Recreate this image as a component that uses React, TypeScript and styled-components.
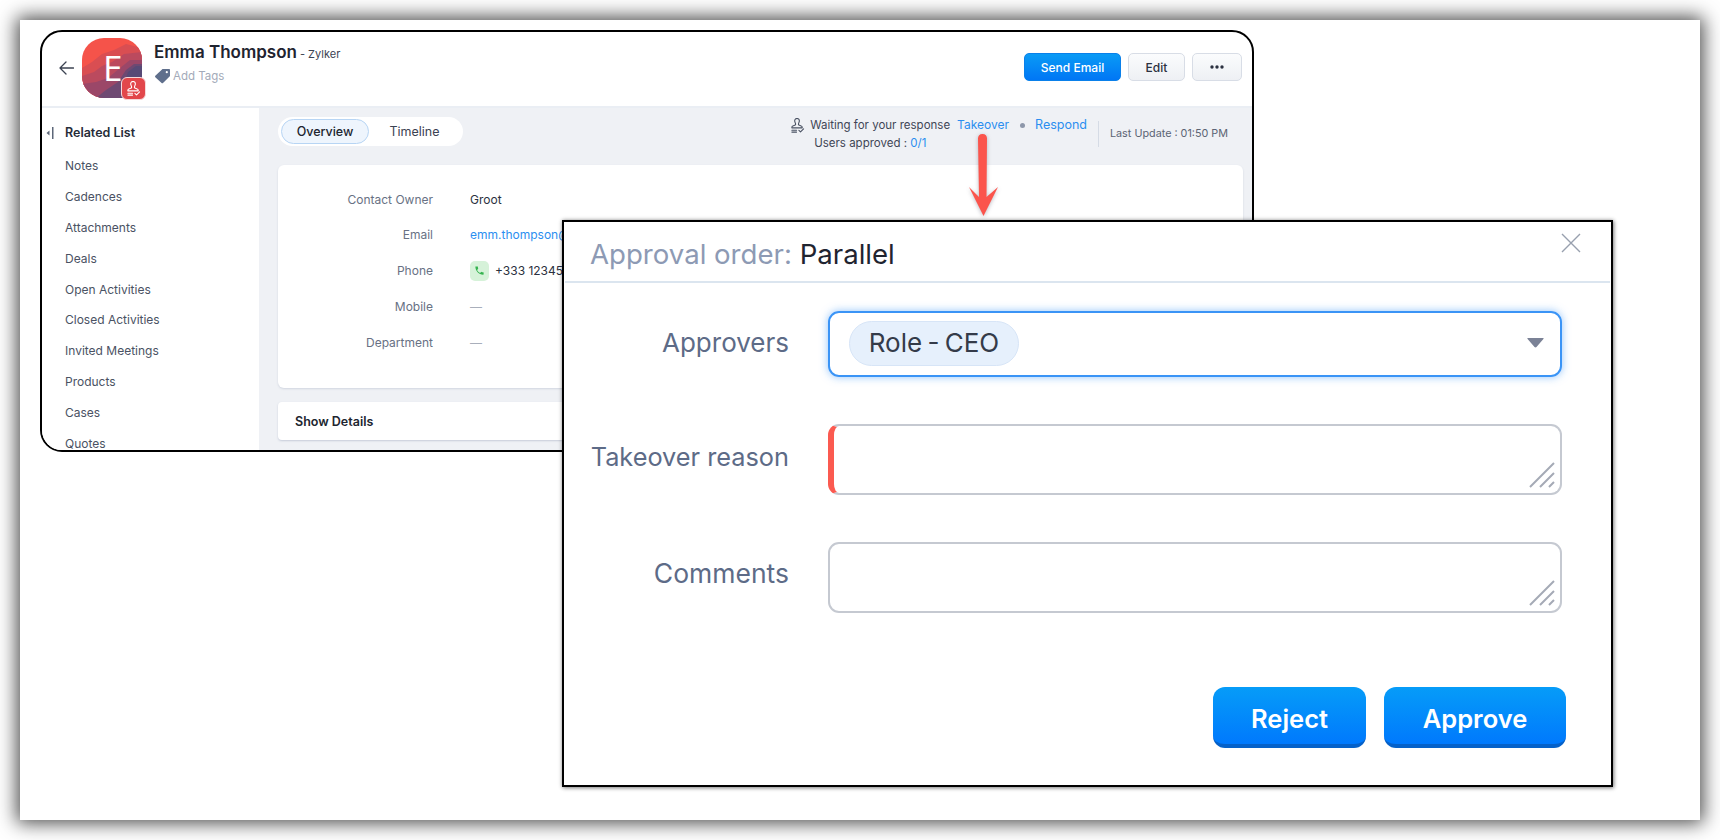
import React from "react";
import styled, { createGlobalStyle } from "styled-components";

const Global = createGlobalStyle`
  html, body { margin: 0; padding: 0; background: #fff; }
  body { font-family: Inter, "Noto Sans", "Liberation Sans", sans-serif; color: #2b3140; }
  #root { padding: 20px; box-sizing: border-box; width: 1720px; height: 840px; overflow: hidden; }
  * { box-sizing: border-box; }
`;

const Frame = styled.div`
  position: relative;
  width: 1680px;
  height: 800px;
  padding: 10px 0 0 20px;
  background: #fff;
  box-shadow: 0 0 18px 3px rgba(0, 0, 0, 0.72);
`;

const AppWindow = styled.section`
  width: 1214px;
  height: 422px;
  border: 2px solid #000;
  border-radius: 22px;
  overflow: hidden;
  background: #fff;
  display: flex;
  flex-direction: column;
`;

const Header = styled.header`
  height: 76px;
  flex: none;
  display: flex;
  align-items: center;
  padding: 0 10px 2px 17px;
  border-bottom: 2px solid #eaeef4;
`;

const BackIcon = styled.svg`
  width: 15px;
  height: 14px;
  flex: none;
  margin-right: 8px;
`;

const Avatar = styled.div`
  position: relative;
  width: 60px;
  height: 60px;
  flex: none;
  margin-right: 12px;
  display: flex;
  align-items: center;
  padding: 0 0 2px 21px;
  color: #fff;
  font: 400 35px "Open Sans", sans-serif;
`;

const AvatarArt = styled.svg`
  position: absolute;
  inset: 0;
  z-index: 0;
`;

const AvatarLetter = styled.span`
  position: relative;
  z-index: 1;
`;

const AvatarBadge = styled.div`
  position: absolute;
  right: -4px;
  bottom: -2px;
  z-index: 2;
  width: 25px;
  height: 23px;
  border: 1px solid #f6d9da;
  border-radius: 6px;
  background: #e2474b;
  display: flex;
  align-items: center;
  justify-content: center;
`;

const Identity = styled.div`
  display: flex;
  flex-direction: column;
  gap: 6px;
  flex: 1;
  margin-top: -10px;
`;

const NameLine = styled.div`
  display: flex;
  align-items: baseline;
  gap: 3px;
`;

const Name = styled.span`
  font-size: 17px;
  font-weight: 600;
  color: #1f2430;
`;

const Company = styled.span`
  font-size: 11px;
  color: #3b4252;
`;

const TagLine = styled.div`
  display: flex;
  align-items: center;
  gap: 2px;
  font-size: 11.5px;
  color: #a3aab9;
`;

const HeaderActions = styled.div`
  display: flex;
  gap: 7px;
  margin-top: -2px;
`;

const HeaderButton = styled.button<{ $primary?: boolean; $w: number }>`
  width: ${(p) => p.$w}px;
  height: 28px;
  border-radius: 5px;
  font: 500 12px Inter, sans-serif;
  display: flex;
  align-items: center;
  justify-content: center;
  padding: 0;
  color: ${(p) => (p.$primary ? "#fff" : "#2b3140")};
  border: 1px solid ${(p) => (p.$primary ? "#0a80ea" : "#d8dde6")};
  background: ${(p) =>
    p.$primary ? "linear-gradient(#0a9bf5, #0076f5)" : "linear-gradient(#fbfcfd, #eef0f4)"};
`;

const Body = styled.div`
  flex: 1;
  min-height: 0;
  display: flex;
`;

const Sidebar = styled.nav`
  width: 217px;
  flex: none;
  background: #fff;
  padding: 15px 0 0 23px;
  position: relative;
`;

const SideMarker = styled.svg`
  position: absolute;
  left: 4px;
  top: 19px;
`;

const SideTitle = styled.div`
  font-size: 12.5px;
  font-weight: 600;
  color: #262c38;
  height: 20px;
  line-height: 20px;
  margin-bottom: 13.4px;
`;

const SideItem = styled.div`
  font-size: 12px;
  color: #4a5263;
  height: 30.8px;
  line-height: 20px;
`;

const Main = styled.main`
  flex: 1;
  min-width: 0;
  background: #eff1f5;
  padding: 9px 9px 0 19px;
`;

const Toolbar = styled.div`
  display: flex;
  align-items: flex-start;
  justify-content: space-between;
  height: 48px;
`;

const Tabs = styled.div`
  width: 185px;
  height: 29px;
  border-radius: 15px;
  background: #fff;
  display: flex;
  align-items: center;
  padding: 0 3px;
  font-size: 12.5px;
`;

const Tab = styled.div<{ $active?: boolean }>`
  height: 25px;
  border-radius: 13px;
  display: flex;
  align-items: center;
  justify-content: center;
  width: ${(p) => (p.$active ? 88 : 91)}px;
  color: ${(p) => (p.$active ? "#20252f" : "#3b4252")};
  font-weight: ${(p) => (p.$active ? 500 : 400)};
  background: ${(p) => (p.$active ? "#eef5fd" : "transparent")};
  border: 1px solid ${(p) => (p.$active ? "#b7d5f4" : "transparent")};
`;

const StatusArea = styled.div`
  display: flex;
  align-items: center;
  padding: 1px 15px 0 0;
`;

const Status = styled.div`
  display: flex;
  flex-direction: column;
  gap: 3.5px;
  font-size: 11.5px;
  color: #3f4656;
  line-height: 14px;
  padding-right: 11px;
`;

const StatusLine = styled.div<{ $indent?: number }>`
  display: flex;
  align-items: center;
  height: 14px;
  padding-left: ${(p) => p.$indent ?? 0}px;
  white-space: pre;
`;

const StampSlot = styled.span`
  display: flex;
  margin-right: 5px;
`;

const LinkText = styled.span<{ $gap?: number; $size?: number }>`
  color: #2b8ef0;
  margin-left: ${(p) => p.$gap ?? 0}px;
  font-size: ${(p) => p.$size ?? 11.5}px;
`;

const Dot = styled.span`
  width: 5px;
  height: 5px;
  border-radius: 50%;
  background: #8d97aa;
  margin: 0 10px 0 11px;
  flex: none;
`;

const LastUpdate = styled.div`
  height: 26px;
  display: flex;
  align-items: center;
  border-left: 1px solid #d5dbe5;
  padding: 0 0 0 11px;
  font-size: 10.8px;
  color: #5c6474;
  white-space: nowrap;
`;

const DetailCard = styled.div`
  height: 223px;
  border-radius: 6px;
  background: #fff;
  box-shadow: 0 1px 2px rgba(120, 135, 165, 0.25);
  padding: 16.3px 0 0 0;
  margin-bottom: 14px;
`;

const DetailRow = styled.div`
  display: grid;
  grid-template-columns: 155px 1fr;
  column-gap: 37px;
  height: 35.8px;
  align-items: center;
  font-size: 12px;
`;

const DetailLabel = styled.div`
  text-align: right;
  color: #687184;
`;

const DetailValue = styled.div<{ $link?: boolean; $empty?: boolean }>`
  display: flex;
  align-items: center;
  gap: 6px;
  white-space: nowrap;
  color: ${(p) => (p.$link ? "#2b8ef0" : p.$empty ? "#a9afbb" : "#2b3140")};
`;

const PhoneBadge = styled.span`
  width: 19px;
  height: 20px;
  border-radius: 5px;
  background: #d6f2d9;
  display: flex;
  align-items: center;
  justify-content: center;
`;

const ShowDetails = styled.div`
  height: 38px;
  border-radius: 4px;
  background: #fff;
  box-shadow: 0 1px 2px rgba(120, 135, 165, 0.35);
  display: flex;
  align-items: center;
  padding-left: 17px;
  font-size: 12.5px;
  font-weight: 600;
  color: #20252f;
`;

const Arrow = styled.svg`
  position: absolute;
  left: 946px;
  top: 110px;
  z-index: 3;
  filter: drop-shadow(0 1px 2px rgba(60, 60, 80, 0.35));
`;

const Modal = styled.section`
  position: absolute;
  left: 542px;
  top: 200px;
  width: 1051px;
  height: 567px;
  z-index: 2;
  background: #fff;
  border: 2px solid #000;
  box-shadow: 1px 1px 4px rgba(0, 0, 0, 0.4), 0 0 4px rgba(0, 0, 0, 0.25);
  display: flex;
  flex-direction: column;
`;

const ModalHead = styled.header`
  height: 61px;
  flex: none;
  display: flex;
  align-items: center;
  justify-content: space-between;
  padding: 4px 29px 0 25px;
  border-bottom: 2px solid #dbe5ef;
  margin: 0 1px;
`;

const ModalTitle = styled.h2`
  margin: 0;
  font-size: 27.6px;
  font-weight: 400;
  color: #1f2430;
  white-space: pre;
`;

const TitleMuted = styled.span`
  color: #8d9ab4;
`;

const CloseIcon = styled.svg`
  margin-top: -22px;
`;

const Form = styled.div`
  flex: 1;
  display: flex;
  flex-direction: column;
  padding: 28px 47px 0 0;
`;

const FormRow = styled.div<{ $mb: number }>`
  display: grid;
  grid-template-columns: 225px 734px;
  column-gap: 39px;
  align-items: center;
  margin-bottom: ${(p) => p.$mb}px;
`;

const FormLabel = styled.label<{ $size: number; $lift: number }>`
  text-align: right;
  font-size: ${(p) => p.$size}px;
  padding-bottom: ${(p) => p.$lift}px;
  color: #5d6b87;
  white-space: nowrap;
`;

const SelectBox = styled.div`
  position: relative;
  height: 66px;
  border: 2px solid #3a94f6;
  border-radius: 11px;
  box-shadow: 0 0 8px rgba(58, 148, 246, 0.55);
  display: flex;
  align-items: center;
  padding: 0 0 2px 19px;
`;

const Chip = styled.span`
  height: 45px;
  width: 170px;
  border-radius: 23px;
  background: #e6f0fc;
  border: 1px solid #d7e5f7;
  display: flex;
  align-items: center;
  justify-content: center;
  padding-bottom: 2px;
  font-size: 26px;
  word-spacing: -2px;
  color: #343b49;
`;

const Caret = styled.svg`
  position: absolute;
  right: 16px;
  top: 25px;
`;

const TextBox = styled.div<{ $required?: boolean }>`
  position: relative;
  height: 71px;
  border: 2px solid #c5c9d1;
  border-radius: 11px;
  overflow: hidden;
  border-left: ${(p) => (p.$required ? "6px solid #fb5a50" : "2px solid #c5c9d1")};
`;

const Grip = styled.svg`
  position: absolute;
  right: 5px;
  bottom: 5px;
`;

const Footer = styled.div`
  display: flex;
  justify-content: flex-end;
  gap: 18px;
  margin-top: 74px;
  margin-right: -2px;
`;

const BigButton = styled.button<{ $w: number }>`
  width: ${(p) => p.$w}px;
  height: 61px;
  border: 0;
  border-bottom: 4px solid #0561c9;
  border-radius: 12px;
  background: linear-gradient(#069cf8, #0079fd);
  color: #fff;
  font: 600 25.5px Inter, sans-serif;
  padding: 5px 0 0;
`;

const sideItems = ["Notes", "Cadences", "Attachments", "Deals", "Open Activities", "Closed Activities", "Invited Meetings", "Products", "Cases", "Quotes"];

const Stamp = ({ color, size }: { color: string; size: number }) => (
  <svg width={size} height={size} viewBox="0 0 16 16" fill="none" stroke={color} strokeWidth="1.2" strokeLinecap="round" strokeLinejoin="round">
    <path d="M5 3a2.500 2.500 0 0 1 5 0c0 1.400-1 2.400-1 3.700 0 .6.400.9 1 1.100l2 .7c.7.2 1 .7 1 1.300v.7H2v-.7c0-.6.400-1.100 1-1.300l2-.7c.6-.2 1-.5 1-1.100C6 5.400 5 4.400 5 3z" />
    <path d="M2 13h5M2 15h5M9.500 13.200l1.700 1.600 3.300-3.300" />
  </svg>
);

const Grips = () => (
  <Grip width="26" height="26" viewBox="0 0 26 26" stroke="#a5aab6" strokeWidth="2">
    <path d="M1 25 25 1M11 25 25 11M20 25 25 20" />
  </Grip>
);

export default function App() {
  return (
    <Frame>
      <Global />
      <AppWindow>
        <Header>
          <BackIcon viewBox="0 0 15 14" fill="none" stroke="#3c4352" strokeWidth="1.3" strokeLinecap="round" strokeLinejoin="round">
            <path d="M14.500 7H1M7 1 1 7l6 6" />
          </BackIcon>
          <Avatar>
            <AvatarArt width="60" height="60" viewBox="0 0 60 60">
              <defs>
                <clipPath id="ava"><rect width="60" height="60" rx="22" /></clipPath>
              </defs>
              <g clipPath="url(#ava)">
                <rect width="60" height="60" fill="#f5534a" />
                <path d="M0 30 10 24 20 16 32 12 44 6 60 10V60H0Z" fill="#d94e52" />
                <path d="M0 38 12 34 20 28 30 24 42 16 60 14V60H0Z" fill="#bb4a5e" />
                <path d="M0 46 14 44 26 40 38 30 48 22 60 22V60H0Z" fill="#9b4768" />
                <path d="M14 60 24 52 36 44 44 32 52 26 60 26V60Z" fill="#6e4972" />
                <path d="M38 60 42 46 46 34 54 28 60 28V60Z" fill="#574a76" />
              </g>
            </AvatarArt>
            <AvatarLetter>E</AvatarLetter>
            <AvatarBadge><Stamp color="#fff" size={15} /></AvatarBadge>
          </Avatar>
          <Identity>
            <NameLine>
              <Name>Emma Thompson</Name>
              <Company>- Zylker</Company>
            </NameLine>
            <TagLine>
              <svg width="17" height="16" viewBox="0 0 17 16"><path d="M9 1h6.200c.5 0 .8.400.8.800V7.500c0 .4-.1.700-.4 1L9 15c-.4.400-1 .400-1.400 0L1.300 9.200c-.4-.4-.4-1 0-1.400L8 1.400c.3-.3.600-.4 1-.4z" fill="#5f6f8c" /><circle cx="12.800" cy="4.200" r="1.100" fill="#fff" /></svg>
              Add Tags
            </TagLine>
          </Identity>
          <HeaderActions>
            <HeaderButton $primary $w={97}>Send Email</HeaderButton>
            <HeaderButton $w={57}>Edit</HeaderButton>
            <HeaderButton $w={50}>
              <svg width="14" height="4" viewBox="0 0 14 4" fill="#2b3140"><circle cx="2" cy="2" r="1.700" /><circle cx="7" cy="2" r="1.700" /><circle cx="12" cy="2" r="1.700" /></svg>
            </HeaderButton>
          </HeaderActions>
        </Header>
        <Body>
          <Sidebar>
            <SideMarker width="8" height="12" viewBox="0 0 8 12"><path d="M3.500 3.500v5L0.500 6z" fill="#5d6779" /><rect x="6" y="0" width="1.500" height="12" fill="#5d6779" /></SideMarker>
            <SideTitle>Related List</SideTitle>
            {sideItems.map((s) => <SideItem key={s}>{s}</SideItem>)}
          </Sidebar>
          <Main>
            <Toolbar>
              <Tabs>
                <Tab $active>Overview</Tab>
                <Tab>Timeline</Tab>
              </Tabs>
              <StatusArea>
                <Status>
                  <StatusLine>
                    <StampSlot><Stamp color="#4a5263" size={15} /></StampSlot>
                    Waiting for your response
                    <LinkText $gap={7} $size={12}>Takeover</LinkText>
                    <Dot />
                    <LinkText $size={12.5}>Respond</LinkText>
                  </StatusLine>
                  <StatusLine $indent={24}>Users approved : <LinkText>0/1</LinkText></StatusLine>
                </Status>
                <LastUpdate>Last Update : 01:50 PM</LastUpdate>
              </StatusArea>
            </Toolbar>
            <DetailCard>
              <DetailRow><DetailLabel>Contact Owner</DetailLabel><DetailValue>Groot</DetailValue></DetailRow>
              <DetailRow><DetailLabel>Email</DetailLabel><DetailValue $link>emm.thompson@zylker.com</DetailValue></DetailRow>
              <DetailRow>
                <DetailLabel>Phone</DetailLabel>
                <DetailValue>
                  <PhoneBadge>
                    <svg width="11" height="11" viewBox="0 0 24 24" fill="#35b34f"><path d="M6.600 10.800a15 15 0 0 0 6.600 6.600l2.200-2.200c.3-.3.700-.4 1-.2 1.100.4 2.300.6 3.600.6.600 0 1 .4 1 1V20c0 .6-.4 1-1 1C10.600 21 3 13.400 3 4c0-.6.400-1 1-1h3.500c.6 0 1 .4 1 1 0 1.300.2 2.500.6 3.600.1.300 0 .7-.2 1z" /></svg>
                  </PhoneBadge>
                  +333 1234567890
                </DetailValue>
              </DetailRow>
              <DetailRow><DetailLabel>Mobile</DetailLabel><DetailValue $empty>—</DetailValue></DetailRow>
              <DetailRow><DetailLabel>Department</DetailLabel><DetailValue $empty>—</DetailValue></DetailRow>
            </DetailCard>
            <ShowDetails>Show Details</ShowDetails>
          </Main>
        </Body>
      </AppWindow>

      <Arrow width="36" height="88" viewBox="0 0 36 88">
        <path d="M16.500 4c3 0 4.500 2 4.500 4.500L20.500 67 32 57 17.500 86 3 57 13 67 12 8.500C12 6 13.500 4 16.500 4z" fill="#fb544c" />
      </Arrow>

      <Modal>
        <ModalHead>
          <ModalTitle><TitleMuted>Approval order:</TitleMuted> Parallel</ModalTitle>
          <CloseIcon width="20" height="20" viewBox="0 0 20 20" stroke="#98a0ae" strokeWidth="1.400"><path d="M1 1 19 19M19 1 1 19" /></CloseIcon>
        </ModalHead>
        <Form>
          <FormRow $mb={47}>
            <FormLabel $size={26} $lift={4}>Approvers</FormLabel>
            <SelectBox>
              <Chip>Role - CEO</Chip>
              <Caret width="17" height="10" viewBox="0 0 17 10"><path d="M1 0h15c.6 0 .8.600.4 1L9.500 9c-.5.500-1.500.500-2 0L.600 1C.200.600.400 0 1 0z" fill="#7b8296" /></Caret>
            </SelectBox>
          </FormRow>
          <FormRow $mb={47}>
            <FormLabel $size={25.3} $lift={7}>Takeover reason</FormLabel>
            <TextBox $required><Grips /></TextBox>
          </FormRow>
          <FormRow $mb={0}>
            <FormLabel $size={26.5} $lift={9}>Comments</FormLabel>
            <TextBox><Grips /></TextBox>
          </FormRow>
          <Footer>
            <BigButton $w={153}>Reject</BigButton>
            <BigButton $w={182}>Approve</BigButton>
          </Footer>
        </Form>
      </Modal>
    </Frame>
  );
}
